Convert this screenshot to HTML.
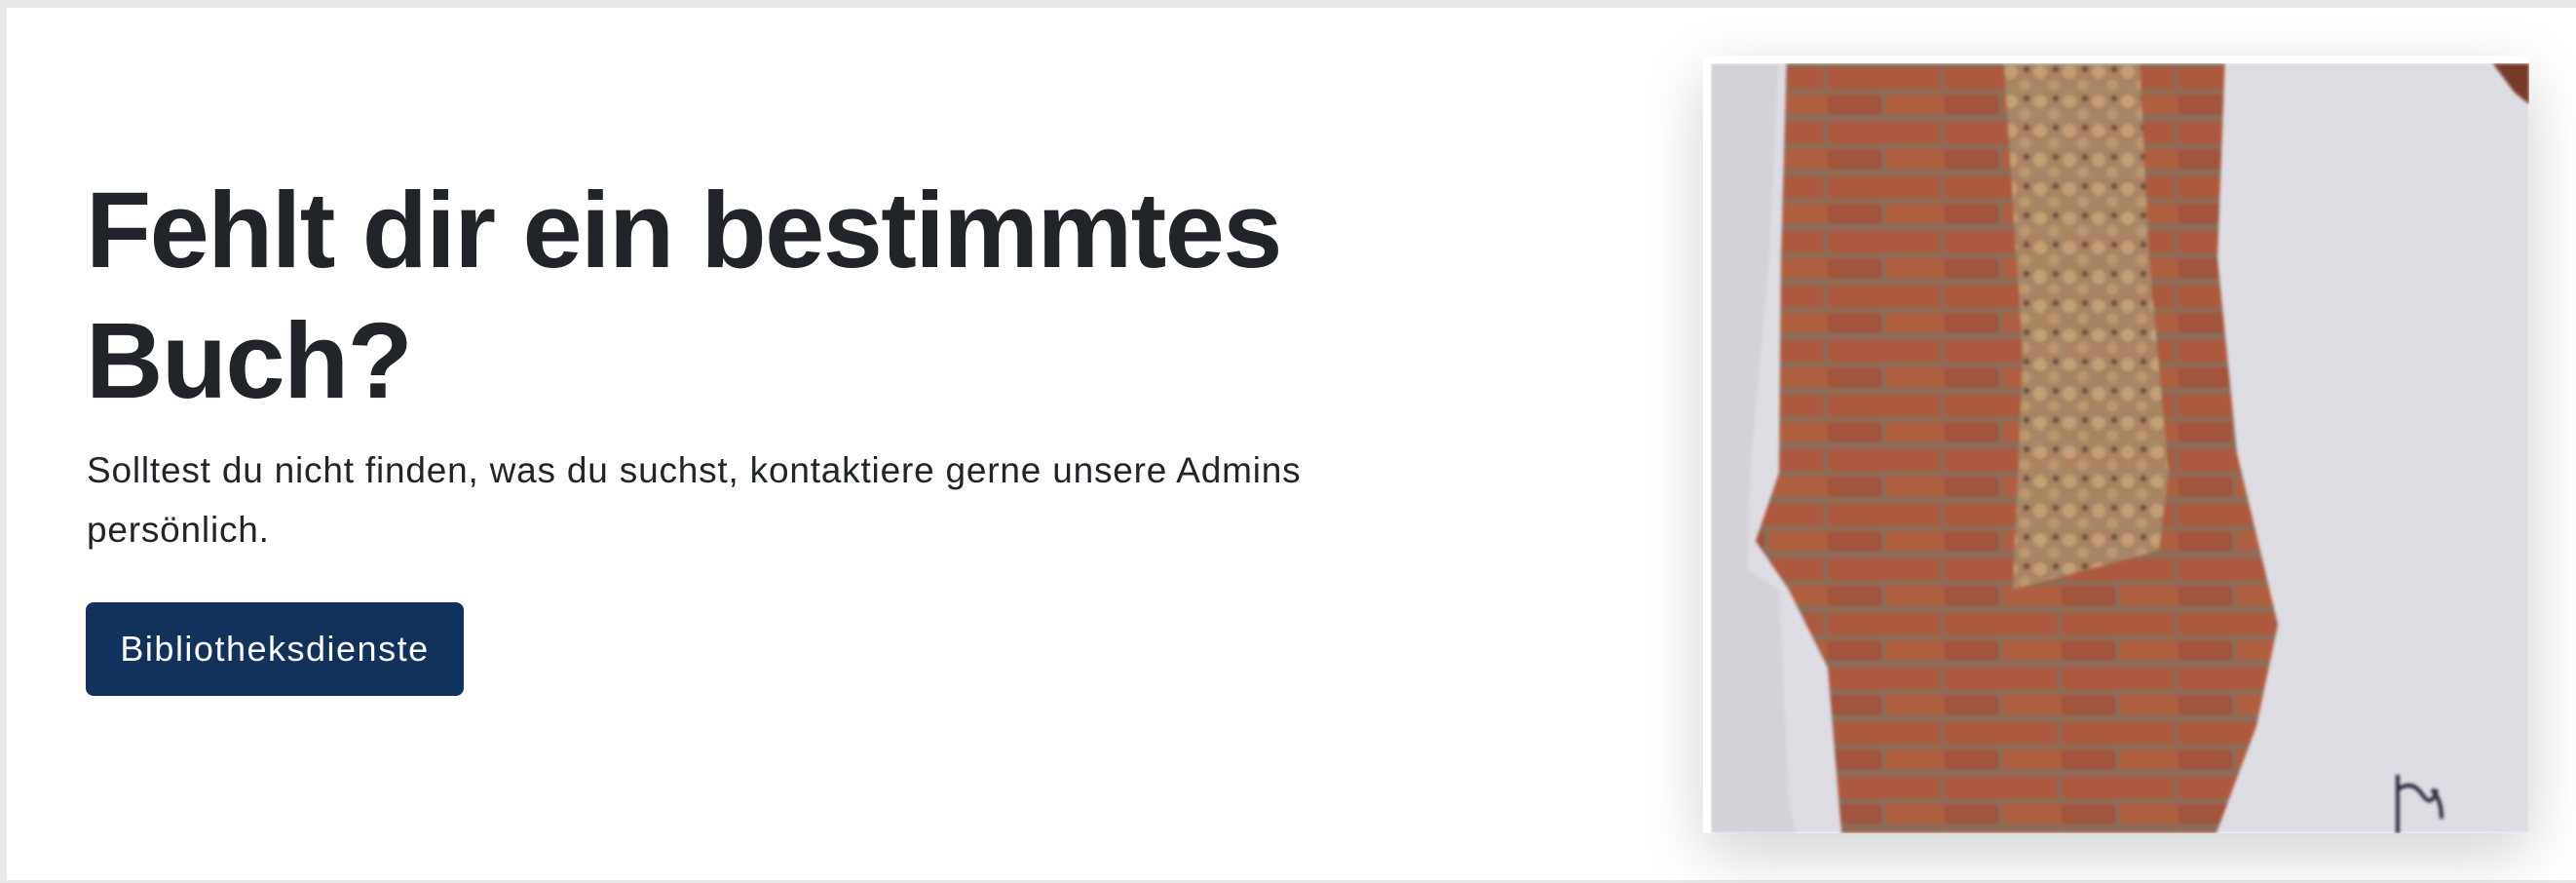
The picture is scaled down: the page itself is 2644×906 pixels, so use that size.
<!DOCTYPE html>
<html><head><meta charset="utf-8"><style>
*{margin:0;padding:0;box-sizing:border-box}
html,body{width:2644px;height:906px;overflow:hidden;background:#e9e9ec}
.card{position:absolute;left:7px;top:8px;width:2637px;height:895px;background:#fff}
h1{position:absolute;left:88px;top:170px;font-family:"Liberation Sans",Arial,sans-serif;font-weight:700;font-size:110px;line-height:134px;letter-spacing:-1.6px;color:#212529}
p{position:absolute;left:89px;top:452px;font-family:"Liberation Sans",Arial,sans-serif;font-size:37px;line-height:61px;letter-spacing:0.8px;color:#212529;white-space:nowrap}
.btn{position:absolute;left:88px;top:618px;width:388px;height:96px;background:#12325e;border-radius:8px;color:#fff;font-family:"Liberation Sans",Arial,sans-serif;font-size:36px;letter-spacing:1.5px;line-height:96px;text-align:center}
.frame{position:absolute;left:1748px;top:57px;width:848px;height:798px;background:#fff;box-shadow:0 20px 60px rgba(0,0,0,.18)}
.photo{position:absolute;left:8px;top:8px;width:840px;height:790px;overflow:hidden}
.photo svg{filter:blur(1.5px)}
</style></head><body>
<div class="card"></div>
<h1>Fehlt dir ein bestimmtes<br>Buch?</h1>
<p>Solltest du nicht finden, was du suchst, kontaktiere gerne unsere Admins<br>persönlich.</p>
<div class="btn">Bibliotheksdienste</div>
<div class="frame"><div class="photo">
<svg width="840" height="790" viewBox="0 0 840 790">
<defs>
<pattern id="br" width="120" height="56" patternUnits="userSpaceOnUse">
<rect width="120" height="56" fill="#8e6c58"/>
<rect x="0" y="4" width="115" height="22" fill="#ad5a3e"/>
<rect x="-60" y="32" width="115" height="20" fill="#a2543c"/>
<rect x="60" y="32" width="115" height="20" fill="#b0603f"/>
</pattern>
<pattern id="rb" width="30" height="30" patternUnits="userSpaceOnUse">
<rect width="30" height="30" fill="#a88a68"/>
<circle cx="8" cy="9" r="7" fill="#c9ab7c"/>
<circle cx="22" cy="22" r="6" fill="#bfa074"/>
<circle cx="24" cy="6" r="3" fill="#5e4a3a"/>
</pattern>
</defs>
<rect x="-10" y="-10" width="860" height="810" fill="#dddce2"/>
<path d="M-10 -10H70L60 200L40 420L38 520L70 540L80 760L90 800H-10Z" fill="#d3d2d8"/>
<path d="M78 -10L528 -10L520 200L540 400L582 576L560 680L515 800L135 800L120 620L80 540L46 490L70 420L72 200Z" fill="url(#br)"/>
<path d="M300 -10L440 -10L450 200L470 420L460 500L310 540L320 300Z" fill="url(#rb)" opacity=".85"/>
<path d="M795 -10H850V50L825 30Z" fill="#7a3a2a"/>
<path d="M705 730v60M705 745q15-10 25 5t15 -5M740 745q10 10 10 30" stroke="#2a2a40" stroke-width="4" fill="none"/>
</svg>
</div></div>
</body></html>
